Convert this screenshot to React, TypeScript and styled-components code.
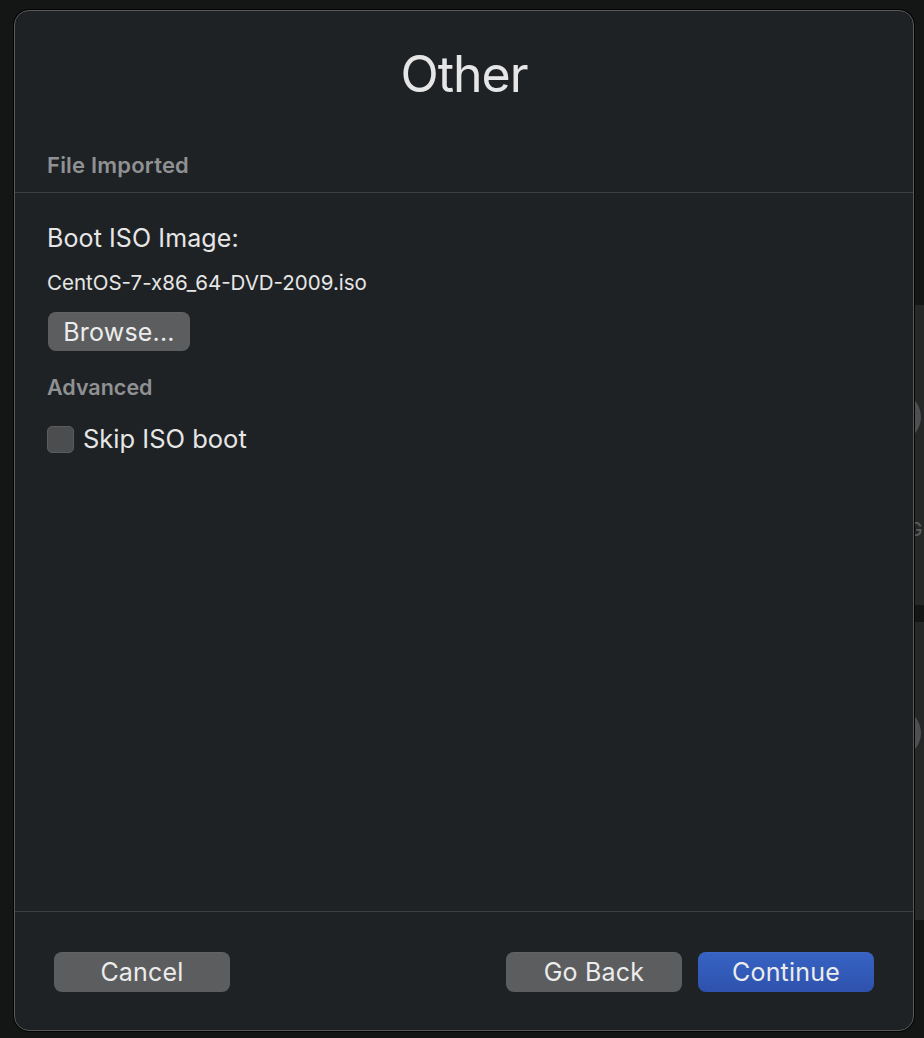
import React from 'react'
import styled, {createGlobalStyle} from 'styled-components'

const GlobalStyle = createGlobalStyle`
  html, body {
    margin: 0;
    padding: 0;
    background: #141515;
  }
  body {
    font-family: Inter, "Liberation Sans", "Noto Sans", sans-serif;
    -webkit-font-smoothing: antialiased;
  }
  #root {
    height: 1038px;
  }
`

const Page = styled.div`
  height: 1038px;
  display: flex;
  align-items: flex-start;
  padding-left: 14px;
  box-sizing: border-box;
  overflow: hidden;
`

const Sheet = styled.div`
  flex: none;
  width: 900px;
  height: 1021px;
  margin-top: 10px;
  box-sizing: border-box;
  display: flex;
  flex-direction: column;
  background: #1f2225;
  border: 1px solid #56585a;
  border-radius: 15px;
  box-shadow: 0 0 0 1px #050505;
  color: #e4e4e4;
`

const Title = styled.h1`
  margin: 33px 0 0;
  font-size: 50px;
  line-height: 60px;
  font-weight: 400;
  letter-spacing: -1px;
  text-align: center;
  color: #e6e6e6;
`

const SectionLabel = styled.div<{$top: number}>`
  margin-top: ${(p) => p.$top}px;
  padding-left: 32px;
  font-size: 22px;
  line-height: 26px;
  font-weight: 600;
  letter-spacing: 0.2px;
  color: #8f9193;
`

const Divider = styled.div<{$top?: number}>`
  flex: none;
  height: 1px;
  margin-top: ${(p) => p.$top ?? 0}px;
  background: #3c3f42;
`

const Body = styled.div`
  flex: 1;
  display: flex;
  flex-direction: column;
  align-items: flex-start;
  padding: 30px 0 0 32px;
`

const FieldLabel = styled.div`
  font-size: 25px;
  line-height: 30px;
  letter-spacing: 0.1px;
  color: #e6e6e6;
`

const FileName = styled.div`
  margin-top: 18px;
  font-size: 20.5px;
  line-height: 24px;
  color: #e6e6e6;
`

const Button = styled.button<{$primary?: boolean; $width: number; $height: number}>`
  width: ${(p) => p.$width}px;
  height: ${(p) => p.$height}px;
  padding: 0;
  border: none;
  border-radius: 8px;
  font-family: inherit;
  font-size: 25px;
  letter-spacing: 0.2px;
  color: #ececec;
  background: ${(p) =>
    p.$primary
      ? 'linear-gradient(180deg, #3763c4 0%, #2e52ad 100%)'
      : '#5c5d5f'};
  box-shadow: 0 0.5px 0 rgba(255, 255, 255, 0.08) inset;
  cursor: default;
`

const BrowseButton = styled(Button)`
  margin-top: 17px;
  margin-left: 1px;
`

const Advanced = styled(SectionLabel)`
  padding-left: 0;
  font-size: 21.5px;
  letter-spacing: 0;
`

const CheckRow = styled.label`
  margin-top: 24px;
  display: flex;
  align-items: center;
  gap: 9px;
`

const CheckBox = styled.span`
  width: 25px;
  height: 25px;
  border-radius: 5px;
  background: #4b4d4f;
  border: 1px solid #5a5c5e;
`

const CheckText = styled.span`
  font-size: 25.5px;
  line-height: 30px;
  color: #e6e6e6;
`

const Footer = styled.div`
  display: flex;
  align-items: center;
  gap: 16px;
  padding: 40px 39px 38px 39px;
`

const Spacer = styled.div`
  flex: 1;
`

/* the app window behind the sheet, only its left edge shows */
const Backdrop = styled.div`
  flex: 1;
  align-self: stretch;
  margin-left: 1px;
  display: flex;
  flex-direction: column;
  overflow: hidden;
`

const Card = styled.div<{$top: number; $height: number}>`
  flex: none;
  margin-top: ${(p) => p.$top}px;
  height: ${(p) => p.$height}px;
  background: #262727;
  display: flex;
  flex-direction: column;
  overflow: hidden;
`

const Dial = styled.div<{$top: number}>`
  margin: ${(p) => p.$top}px 0 0 -44px;
  width: 50px;
  height: 50px;
  border-radius: 50%;
  background: #4e4f50;
`

const Caption = styled.div<{$top: number}>`
  margin: ${(p) => p.$top}px 0 0 -6px;
  font-size: 18px;
  line-height: 20px;
  font-weight: 500;
  color: #5a5b5c;
`

export default function App() {
  return (
    <>
      <GlobalStyle />
      <Page>
        <Sheet>
          <Title>Other</Title>
          <SectionLabel $top={48}>File Imported</SectionLabel>
          <Divider $top={14} />
          <Body>
            <FieldLabel>Boot ISO Image:</FieldLabel>
            <FileName>CentOS-7-x86_64-DVD-2009.iso</FileName>
            <BrowseButton $width={142} $height={39}>
              Browse...
            </BrowseButton>
            <Advanced $top={23}>Advanced</Advanced>
            <CheckRow>
              <CheckBox />
              <CheckText>Skip ISO boot</CheckText>
            </CheckRow>
          </Body>
          <Divider />
          <Footer>
            <Button $width={176} $height={40}>
              Cancel
            </Button>
            <Spacer />
            <Button $width={176} $height={40}>
              Go Back
            </Button>
            <Button $primary $width={176} $height={40}>
              Continue
            </Button>
          </Footer>
        </Sheet>
        <Backdrop>
          <Card $top={305} $height={300}>
            <Dial $top={87} />
            <Caption $top={78}>G</Caption>
          </Card>
          <Card $top={17} $height={298}>
            <Dial $top={86} />
            <Caption $top={72}>t</Caption>
          </Card>
        </Backdrop>
      </Page>
    </>
  )
}
